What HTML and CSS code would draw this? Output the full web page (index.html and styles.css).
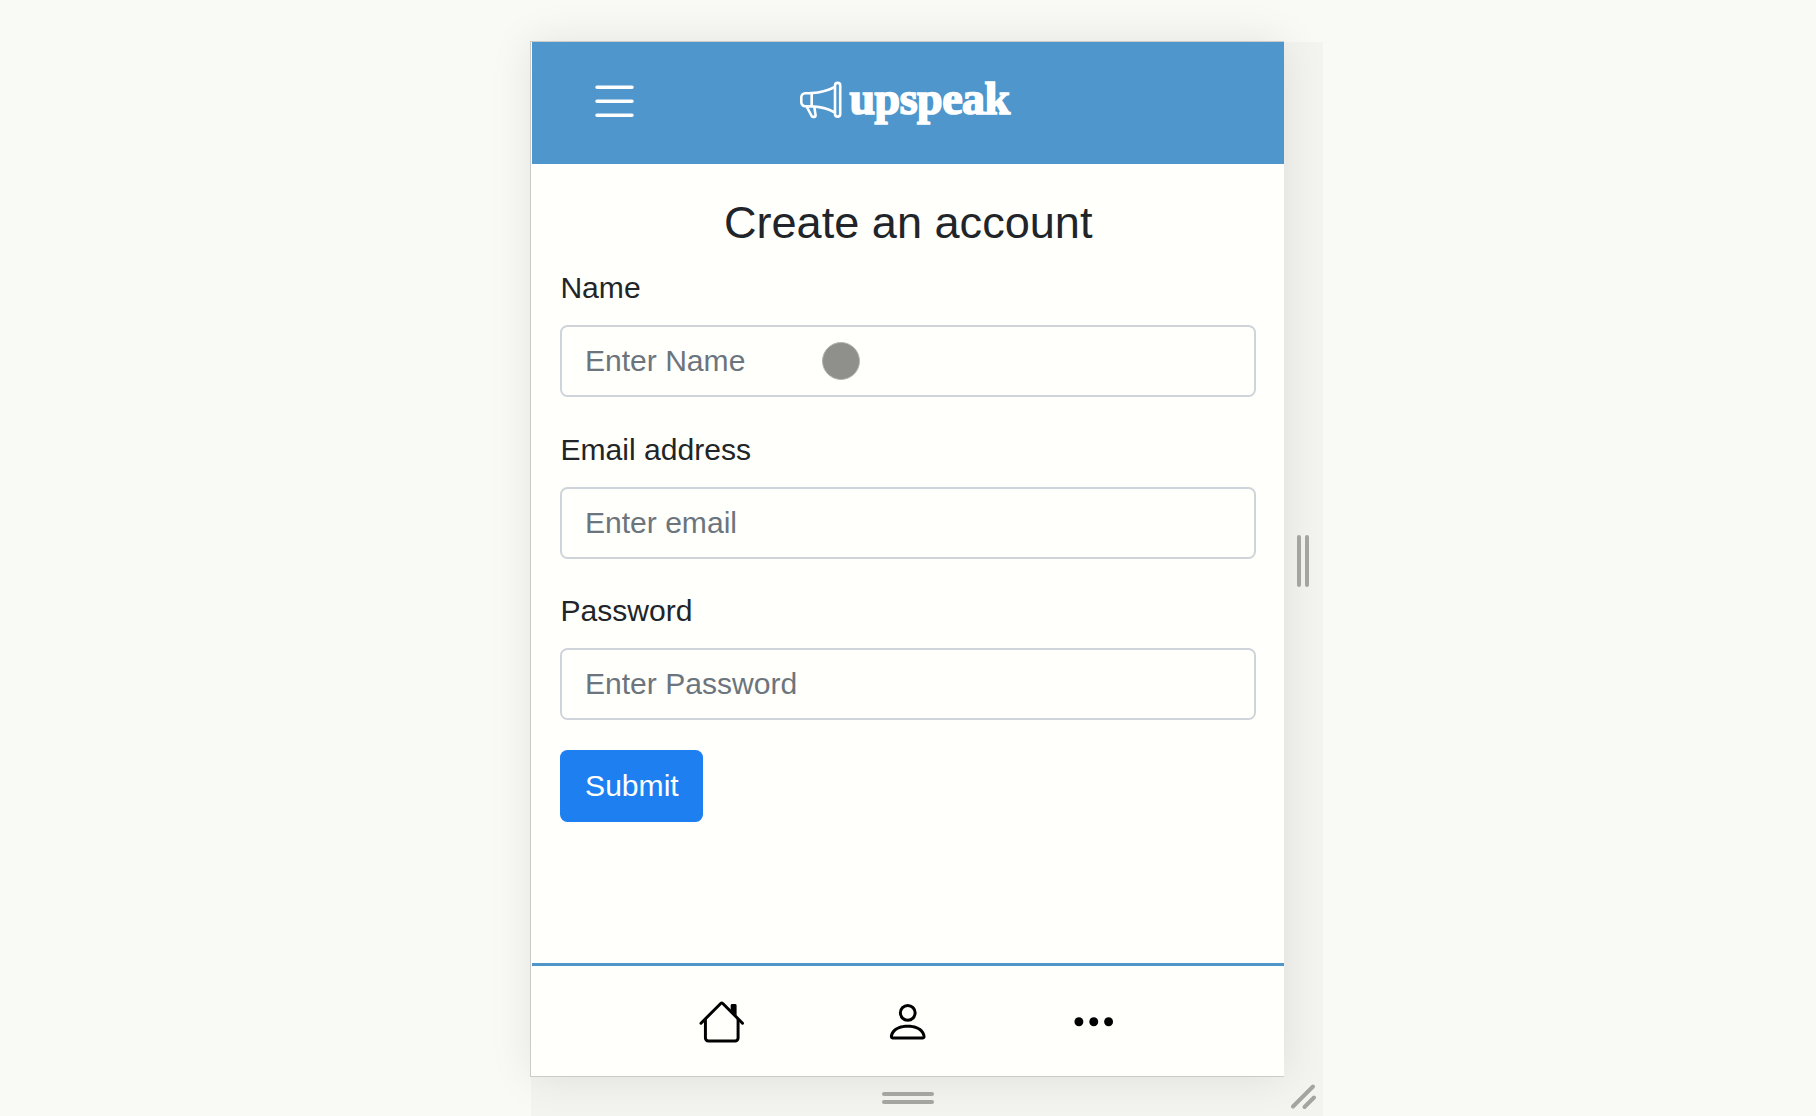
FILE: index.html
```html
<!DOCTYPE html>
<html lang="en">
<head>
<meta charset="utf-8">
<title>upspeak</title>
<link rel="stylesheet" href="styles.css">
</head>
<body>
<div class="viewport">
  <div class="resizer">
    <main class="device">
      <header class="topbar">
        <svg class="menu-icon" viewBox="0 0 16 16"><path d="M3 3.5h10M3 7.5h10M3 11.5h10"/></svg>
        <div class="brand">
          <svg class="brand-icon" viewBox="0 0 16 16"><path d="M13 2.5a1.5 1.5 0 0 1 3 0v11a1.5 1.5 0 0 1-3 0v-.214c-2.162-1.241-4.49-1.843-6.912-2.083l.405 2.712A1 1 0 0 1 5.51 15.1h-.548a1 1 0 0 1-.916-.599l-1.85-3.49a68.14 68.14 0 0 0-.202-.003A2.014 2.014 0 0 1 0 9V7a2.02 2.02 0 0 1 1.992-2.013 74.663 74.663 0 0 0 2.483-.075c3.043-.154 6.148-.849 8.525-2.199V2.5zm1 0v11a.5.5 0 0 0 1 0v-11a.5.5 0 0 0-1 0zm-1 1.35c-2.344 1.205-5.209 1.842-8 2.033v4.233c.18.01.359.022.537.036 2.568.189 5.093.744 7.463 1.993V3.85zm-9 6.215v-4.13a95.09 95.09 0 0 1-1.992.052A1.02 1.02 0 0 0 1 7v2c0 .55.448 1.002 1.006 1.009A60.49 60.49 0 0 1 4 10.065zm-.657.975 1.609 3.037.01.024h.548l-.002-.014-.443-2.966a68.019 68.019 0 0 0-1.722-.082z"/></svg>
          <span class="brand-name">upspeak</span>
        </div>
      </header>
      <form class="signup">
        <h1 class="title">Create an account</h1>
        <label class="label" for="name">Name</label>
        <input class="field" id="name" type="text" placeholder="Enter Name">
        <label class="label" for="email">Email address</label>
        <input class="field" id="email" type="email" placeholder="Enter email">
        <label class="label" for="password">Password</label>
        <input class="field" id="password" type="password" placeholder="Enter Password">
        <button class="submit" type="button">Submit</button>
      </form>
      <nav class="tabs">
        <svg class="tab" viewBox="0 0 16 16"><path d="M2 13.5V7h1v6.5a.5.5 0 0 0 .5.5h9a.5.5 0 0 0 .5-.5V7h1v6.5a1.5 1.5 0 0 1-1.5 1.5h-9A1.5 1.5 0 0 1 2 13.5zm11-11V6l-2-2V2.5a.5.5 0 0 1 .5-.5h1a.5.5 0 0 1 .5.5z"/><path d="M7.293 1.5a1 1 0 0 1 1.414 0l6.647 6.646a.5.5 0 0 1-.708.708L8 2.207 1.354 8.854a.5.5 0 1 1-.708-.708L7.293 1.5z"/></svg>
        <svg class="tab" viewBox="0 0 16 16"><path d="M8 8a3 3 0 1 0 0-6 3 3 0 0 0 0 6zm2-3a2 2 0 1 1-4 0 2 2 0 0 1 4 0zm4 8c0 1-1 1-1 1H3s-1 0-1-1 1-4 6-4 6 3 6 4zm-1-.004c-.001-.246-.154-.986-.832-1.664C11.516 10.68 10.289 10 8 10c-2.29 0-3.516.68-4.168 1.332-.678.678-.83 1.418-.832 1.664h10z"/></svg>
        <svg class="tab" viewBox="0 0 16 16"><circle cx="3" cy="8" r="1.5"/><circle cx="8" cy="8" r="1.5"/><circle cx="13" cy="8" r="1.5"/></svg>
      </nav>
    </main>
    <div class="grip grip-side"><i></i><i></i></div>
    <div class="grip grip-bottom"><i></i><i></i></div>
    <svg class="grip-corner" viewBox="0 0 39 39"><path d="M9 29.5 29 9.5M20.5 30 30 20.5"/></svg>
  </div>
  <div class="touch"></div>
</div>
</body>
</html>
```
FILE: styles.css
```css
* { box-sizing: border-box; }

body {
  margin: 0;
  background: #f9faf6;
  font-family: "Liberation Sans", Arial, sans-serif;
  color: #212529;
}

.viewport {
  position: relative;
  height: 1116px;
  padding: 42px 0 0 531px;
  overflow: hidden;
}

.resizer {
  display: grid;
  grid-template-columns: 753px 39px;
  grid-template-rows: 1035px 39px;
  width: 792px;
  background: #f3f4f0;
}

.device {
  display: flex;
  flex-direction: column;
  margin: -1px 0 0 -1px;
  border: 1px solid #cbccca;
  border-right: 0;
  background: #fffffc;
  box-shadow: 0 0 40px rgba(0, 0, 0, 0.09);
}

.topbar {
  display: flex;
  align-items: flex-start;
  height: 122px;
  margin-left: 1px;
  padding: 33px 0 0 54px;
  background: #4e96cc;
}

.menu-icon {
  width: 57px;
  height: 56px;
  fill: none;
  stroke: #fff;
  stroke-linecap: round;
}

.brand {
  display: flex;
  align-items: flex-start;
  margin: 3.5px 0 0 157px;
}

.brand-icon {
  width: 41.5px;
  height: 41.5px;
  fill: #fff;
}

.brand-name {
  margin: -5.5px 0 0 8px;
  font: bold 46px/52px "Liberation Serif", serif;
  letter-spacing: -0.5px;
  color: #fff;
  -webkit-text-stroke: 1.7px #fff;
}

.signup {
  display: flex;
  flex-direction: column;
  flex: 1;
  padding: 32px 28px 0 29.4px;
}

.title {
  margin: 0 0 15px;
  font-size: 45.1px;
  font-weight: 400;
  line-height: 54px;
  text-align: center;
}

.label {
  margin-bottom: 15px;
  font-size: 30.08px;
  line-height: 45px;
}

.field {
  height: 72px;
  margin-bottom: 29.7px;
  padding: 0 22.5px;
  border: 2px solid #ced4da;
  border-radius: 7.5px;
  background: #fffffc;
  font: 30.08px "Liberation Sans", Arial, sans-serif;
  color: #495057;
}

.field::placeholder { color: #6c757d; }

.submit {
  align-self: flex-start;
  width: 143px;
  height: 72px;
  padding: 0;
  border: 0;
  border-radius: 7.5px;
  background: #1e80f0;
  font: 30.08px "Liberation Sans", Arial, sans-serif;
  color: #fff;
}

.tabs {
  display: flex;
  justify-content: center;
  gap: 138.5px;
  height: 113px;
  margin-left: 1px;
  padding-top: 32px;
  border-top: 3px solid #5096c8;
}

.tab {
  width: 47.5px;
  height: 47.5px;
  fill: #000;
}

.grip {
  display: flex;
  align-items: center;
  justify-content: center;
  gap: 4px;
}

.grip i {
  border-radius: 2px;
  background: #a4a5a1;
}

.grip-side { padding: 2px 1px 0 0; }
.grip-side i { width: 4px; height: 52px; }

.grip-bottom {
  flex-direction: column;
  padding-top: 3px;
}
.grip-bottom i { width: 52px; height: 4px; }

.grip-corner {
  width: 39px;
  height: 39px;
  fill: none;
  stroke: #a4a5a1;
  stroke-width: 4;
  stroke-linecap: round;
}

/* simulated finger over the page */
.touch {
  position: absolute;
  left: 822px;
  top: 342px;
  width: 38px;
  height: 38px;
  border: 1px solid #b4b5b1;
  border-radius: 50%;
  background: #8f908b;
}
```
